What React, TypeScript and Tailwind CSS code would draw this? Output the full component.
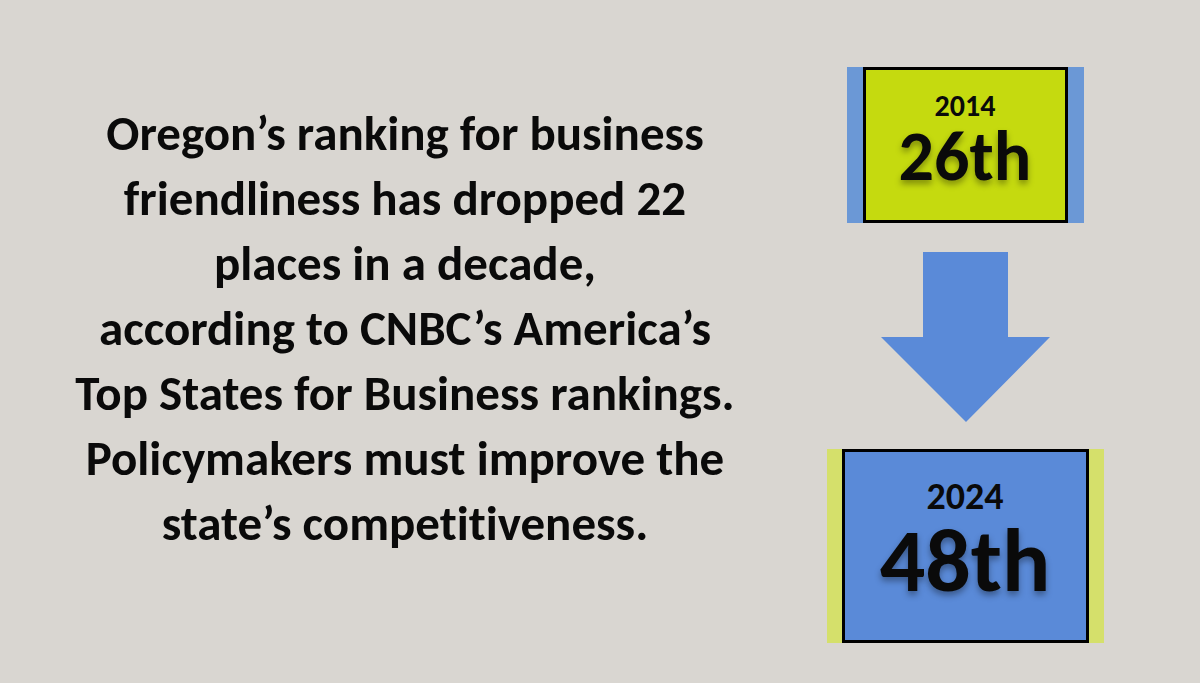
const lines = [
  "Oregon’s ranking for business",
  "friendliness has dropped 22",
  "places in a decade,",
  "according to CNBC’s America’s",
  "Top States for Business rankings.",
  "Policymakers must improve the",
  "state’s competitiveness.",
];

const RankBox = ({
  year,
  rank,
  yearSize,
  rankSize,
}: {
  year: string;
  rank: string;
  yearSize: string;
  rankSize: string;
}) => (
  <div className="flex flex-col items-center leading-none">
    <span className={`${yearSize} font-bold`}>{year}</span>
    <span className={`${rankSize} font-bold [text-shadow:0_4px_6px_rgba(0,0,0,0.35)]`}>{rank}</span>
  </div>
);

export default function App() {
  return (
    <div className="flex h-[683px] w-[1200px] bg-[#d9d6d1] text-[#0a0a0a] [font-family:Carlito,Lato,sans-serif] [font-variant-ligatures:none]">
      {/* Statement */}
      <div className="flex w-[810px] flex-col pt-[101px] text-center text-[49px] font-bold leading-[65px]">
        {lines.map((line) => (
          <p key={line}>{line}</p>
        ))}
      </div>

      {/* Rankings */}
      <div className="flex w-[310px] flex-col items-center pt-[67px]">
        <div className="flex h-[156px] bg-[#6b98d6] px-[16px]">
          <div className="flex w-[205px] items-center justify-center border-[3px] border-black bg-[#c5da0f] pb-[8px]">
            <RankBox year="2014" rank="26th" yearSize="text-[30px]" rankSize="text-[70px]" />
          </div>
        </div>

        <svg className="mt-[29px]" width="169" height="170" viewBox="0 0 169 170">
          <polygon points="42,0 127,0 127,85 169,85 85,170 0,85 42,85" fill="#5a8ad8" />
        </svg>

        <div className="mt-[27px] flex h-[194px] bg-[#d5e06b] px-[15px]">
          <div className="flex w-[247px] items-center justify-center border-[3px] border-black bg-[#5a8ad8] pb-[10px]">
            <RankBox year="2024" rank="48th" yearSize="text-[38px]" rankSize="text-[90px]" />
          </div>
        </div>
      </div>
    </div>
  );
}
